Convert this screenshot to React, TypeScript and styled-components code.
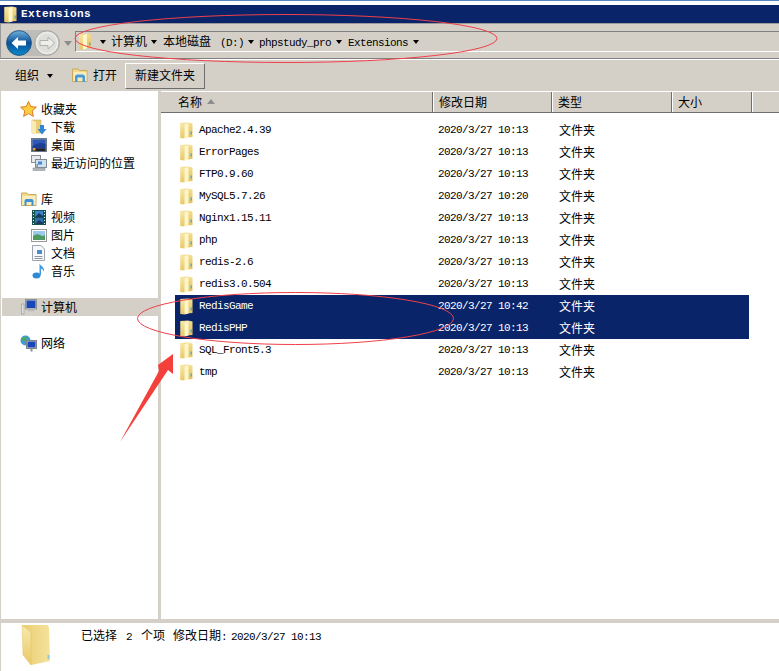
import { FC, ReactNode } from "react";
import styled, { createGlobalStyle } from "styled-components";

const FACE = "#d4d0c8";
const NAVY = "#0a246a";
const LATIN = `"Liberation Mono", "Noto Sans CJK SC", monospace`;

const Global = createGlobalStyle`
html, body { margin: 0; padding: 0; background: #fff; }
body { font-family: "Noto Sans CJK SC", "Liberation Sans", sans-serif; font-size: 12px; color: #000; }
`;

type Folder = { name: string; time: string; selected?: boolean };

const folders: Folder[] = [
    { name: "Apache2.4.39", time: "10:13" },
    { name: "ErrorPages", time: "10:13" },
    { name: "FTP0.9.60", time: "10:13" },
    { name: "MySQL5.7.26", time: "10:20" },
    { name: "Nginx1.15.11", time: "10:13" },
    { name: "php", time: "10:13" },
    { name: "redis-2.6", time: "10:13" },
    { name: "redis3.0.504", time: "10:13" },
    { name: "RedisGame", time: "10:42", selected: true },
    { name: "RedisPHP", time: "10:13", selected: true },
    { name: "SQL_Front5.3", time: "10:13" },
    { name: "tmp", time: "10:13" },
];

/* アイコン類 */
const FolderIcon: FC<{ w?: number; h?: number }> = ({ w = 13, h = 17 }) => (
    <svg width={w} height={h} viewBox="0 0 13 17">
        <defs>
            <linearGradient id="fold" x1="0" y1="0" x2="0" y2="1">
                <stop offset="0" stopColor="#f4de8e" />
                <stop offset="1" stopColor="#e3c05c" />
            </linearGradient>
            <linearGradient id="flap" x1="0" y1="0" x2="0" y2="1">
                <stop offset="0" stopColor="#f8e8a6" />
                <stop offset="1" stopColor="#e8c866" />
            </linearGradient>
        </defs>
        <path d="M.5 1 L8 .5 L12.5 1.5 V15 L.5 16 Z" fill="url(#fold)" />
        <path d="M.5 1 L4.5 2 V16.5 L.5 16 Z" fill="url(#flap)" />
        <path d="M4.5 2 L8.5 1 V15.5 L4.5 16.5 Z" fill="#fdf5cc" />
        <rect x="10.5" y="9.5" width="1.5" height="3" fill="#4fb0dc" />
    </svg>
);

const LargeFolder = () => (
    <svg width="30" height="43" viewBox="0 0 30 43">
        <defs>
            <linearGradient id="large" x1="0" y1="0" x2="1" y2="0">
                <stop offset="0" stopColor="#e9cd72" />
                <stop offset="1" stopColor="#f5e29c" />
            </linearGradient>
            <linearGradient id="largeFlap" x1="0" y1="0" x2="0" y2="1">
                <stop offset="0" stopColor="#f8e9ac" />
                <stop offset="1" stopColor="#e8c968" />
            </linearGradient>
        </defs>
        <path d="M1 1 L27 1 L28 4 L29 37 L10 41 Z" fill="url(#large)" />
        <path d="M1 1 L10 8 V41 L2 31 Z" fill="url(#largeFlap)" stroke="#e2c265" strokeWidth=".5" />
        <rect x="26.5" y="31" width="2" height="4" fill="#8ccbe0" />
    </svg>
);

const StarIcon = () => (
    <svg width="17" height="16" viewBox="0 0 17 16">
        <path d="M8.5 .5 L10.8 5.6 L16.4 6.2 L12.2 9.9 L13.4 15.4 L8.5 12.6 L3.6 15.4 L4.8 9.9 L.6 6.2 L6.2 5.6 Z" fill="#fbcf3e" stroke="#e0762a" strokeWidth="1" />
    </svg>
);

const DownloadIcon = () => (
    <svg width="16" height="16" viewBox="0 0 16 16">
        <path d="M1 1 H10 V14 H1 Z" fill="#e9cd78" stroke="#c9ab55" strokeWidth=".6" />
        <path d="M1 1 L5 3 V15 L1 14 Z" fill="#f8eab0" />
        <path d="M9 6 H13 V10 H15.5 L11 15.5 L6.5 10 H9 Z" fill="#2f86d4" />
    </svg>
);

const DesktopIcon = () => (
    <svg width="16" height="14" viewBox="0 0 16 14">
        <rect x=".5" y=".5" width="15" height="13" fill="#7f93a8" stroke="#6a7787" />
        <rect x="1.5" y="1.5" width="13" height="9" fill="#2e58b8" />
        <path d="M1.5 8 Q8 3 14.5 6 V10.5 H1.5 Z" fill="#1c3f94" />
        <rect x="1.5" y="10.5" width="13" height="2.5" fill="#222" />
        <rect x="2" y="10" width="2.5" height="2.5" fill="#e8a030" />
    </svg>
);

const RecentIcon = () => (
    <svg width="16" height="16" viewBox="0 0 16 16">
        <rect x=".5" y=".5" width="9" height="7" fill="#e8eaec" stroke="#8a8f94" />
        <rect x="4.5" y="4.5" width="11" height="8" fill="#cfe0ee" stroke="#7f8b96" />
        <rect x="7" y="6.5" width="4" height="3" fill="#4a86c8" />
        <rect x="2" y="13" width="12" height="2.5" fill="#b4b7ba" stroke="#85888b" strokeWidth=".5" />
        <rect x="5.5" y="9" width="1.5" height="4" fill="#8a8f94" />
    </svg>
);

const LibraryIcon: FC<{ size?: number }> = ({ size = 16 }) => (
    <svg width={size} height={size} viewBox="0 0 16 16">
        <path d="M.5 2 H6 L7.5 3.5 H15 V14.5 H.5 Z" fill="#f2d98c" stroke="#c8aa5a" />
        <rect x="1.5" y="5" width="13" height="9" fill="#f9edc0" />
        <path d="M3.5 14.5 V10 Q3.5 8 5.5 8 H10.5 Q12.5 8 12.5 10 V14.5 H10.5 V11 H5.5 V14.5 Z" fill="#3f92d2" />
    </svg>
);

const VideoIcon = () => (
    <svg width="14" height="15" viewBox="0 0 14 15">
        <rect width="14" height="15" fill="#17504e" />
        <rect x="3" y="1" width="8" height="6" fill="#3b83c8" />
        <rect x="3" y="8" width="8" height="6" fill="#2d6db0" />
        <path d="M3 7 L7 3 L11 6 V7 Z M3 14 L7 10 L11 13 V14 Z" fill="#1c3b5c" />
        {[1, 4, 7, 10, 13].map((y) => <rect key={y} x="1" y={y} width="1" height="1" fill="#cfe" />)}
        {[1, 4, 7, 10, 13].map((y) => <rect key={y} x="12" y={y} width="1" height="1" fill="#cfe" />)}
    </svg>
);

const PictureIcon = () => (
    <svg width="16" height="13" viewBox="0 0 16 13">
        <rect x=".5" y=".5" width="15" height="12" fill="#fff" stroke="#9a9a9a" />
        <rect x="2" y="2" width="12" height="5" fill="#9cc8ea" />
        <path d="M2 7 Q6 4 9 6 T14 6 V11 H2 Z" fill="#4f9a62" />
    </svg>
);

const DocumentIcon = () => (
    <svg width="13" height="16" viewBox="0 0 13 16">
        <path d="M.5 .5 H9 L12.5 4 V15.5 H.5 Z" fill="#f6f8fb" stroke="#9da4ad" />
        <rect x="5" y="5" width="5" height="4" fill="#4c8ac8" />
        <rect x="2.5" y="11" width="8" height="1" fill="#8d97a3" />
        <rect x="2.5" y="13" width="8" height="1" fill="#8d97a3" />
    </svg>
);

const MusicIcon = () => (
    <svg width="14" height="16" viewBox="0 0 14 16">
        <ellipse cx="4.5" cy="12.5" rx="4" ry="3" fill="#2f8ad6" />
        <path d="M7.5 12 V.5 C8.5 3 13 4 12 9 C11.5 6.5 10 6 9 5.5 V12 Z" fill="#3c9ae2" />
    </svg>
);

const ComputerIcon = () => (
    <svg width="16" height="16" viewBox="0 0 16 16">
        <rect x=".5" y="5" width="2.5" height="10" fill="#dfe2e4" stroke="#8f9295" strokeWidth=".6" />
        <rect x="4.5" y=".5" width="11" height="9.5" fill="#c9ccd0" stroke="#8c9196" />
        <rect x="5.5" y="1.5" width="9" height="7.5" fill="#1a47b8" />
        <rect x="7" y="10.5" width="6" height="2" fill="#b7babd" />
        <rect x="5" y="12.5" width="10" height="1.5" fill="#cfd2d4" />
    </svg>
);

const NetworkIcon = () => (
    <svg width="17" height="17" viewBox="0 0 17 17">
        <circle cx="5.5" cy="5.5" r="5" fill="#3d9bd8" />
        <path d="M2 3 Q5 1 7 3 Q6 6 3 7 Z M6 7 L10 6 L8 10 Z" fill="#4fae4a" />
        <rect x="6.5" y="5.5" width="10" height="8" fill="#c9ccd0" stroke="#7d8388" />
        <rect x="7.5" y="6.5" width="8" height="6" fill="#1a47b8" />
        <rect x="10.5" y="13.5" width="2" height="3" fill="#8c9196" />
    </svg>
);

const OpenIcon = () => (
    <svg width="16" height="16" viewBox="0 0 16 16">
        <path d="M.5 2 H6 L7.5 3.5 H15 V14.5 H.5 Z" fill="#f0d88e" stroke="#c8aa5a" />
        <rect x="1.5" y="5" width="13" height="9" fill="#f8ecbd" />
        <path d="M3 15 V10 Q3 7.5 5.5 7.5 H10.5 Q13 7.5 13 10 V15 H10.5 V10.5 H5.5 V15 Z" fill="#4a9ad8" />
    </svg>
);

const BackIcon = () => (
    <svg width="26" height="26" viewBox="0 0 26 26">
        <defs>
            <linearGradient id="back" x1="0" y1="0" x2="0" y2="1">
                <stop offset="0" stopColor="#6fb0da" />
                <stop offset=".5" stopColor="#0b4f96" />
                <stop offset="1" stopColor="#0a8ccf" />
            </linearGradient>
        </defs>
        <circle cx="13" cy="13" r="12.4" fill="url(#back)" stroke="#1c4a78" strokeWidth=".8" />
        <path d="M5.5 13 L12 7 V10.5 H20 V15.5 H12 V19 Z" fill="#fff" />
    </svg>
);

const ForwardIcon = () => (
    <svg width="26" height="26" viewBox="0 0 26 26">
        <circle cx="13" cy="13" r="12.2" fill="#dededb" stroke="#a4a4a2" />
        <circle cx="13" cy="13" r="10.4" fill="none" stroke="#f4f4f4" />
        <path d="M20.5 13 L14 7 V10.5 H6 V15.5 H14 V19 Z" fill="#eeeeec" stroke="#b0b0ae" />
    </svg>
);

/* 画面本体 */
const Page = styled.div`
position: relative;
width: 779px;
height: 671px;
overflow: hidden;
display: flex;
flex-direction: column;
background: ${FACE};
`;

const TopStrip = styled.div`
height: 1px;
background: #5b87bd;
`;

const WhiteStrip = styled.div`
height: 4px;
background: #fff;
`;

const TitleBar = styled.header`
height: 18px;
padding-left: 4px;
display: flex;
align-items: center;
gap: 4px;
background: ${NAVY};
color: #fff;
font-family: ${LATIN};
font-weight: 700;
font-size: 11px;
letter-spacing: .4px;
`;

const NavBar = styled.div`
height: 36px;
padding-left: 1px;
display: flex;
align-items: flex-start;
border-left: 1px solid #9a9a9a;
border-top: 1px solid #9a9a9a;
border-bottom: 1px solid #808080;
box-shadow: 0 1px 0 #fff;
box-sizing: border-box;
`;

const NavButtons = styled.div`
width: 73px;
height: 34px;
padding: 6px 0 0 4px;
display: flex;
box-sizing: border-box;
`;

const NavPill = styled.div`
width: 54px;
height: 26px;
display: flex;
gap: 2px;
border-radius: 13px;
background: #bdbcb8;
`;

const HistoryCaret = styled.span`
margin: 11px 0 0 4px;
width: 0;
height: 0;
border-left: 4px solid transparent;
border-right: 4px solid transparent;
border-top: 5px solid #8d8d8d;
`;

const AddressBox = styled.div`
flex: 1;
height: 21px;
margin-top: 7px;
padding: 0 0 3px 2px;
display: flex;
align-items: center;
border-top: 1px solid #808080;
border-left: 1px solid #808080;
border-bottom: 1px solid #fff;
box-sizing: border-box;
`;

const AddressFolder = styled.span`
display: flex;
margin-bottom: -3px;
`;

const Crumb = styled.span<{ $left: number }>`
margin-left: ${(p) => p.$left}px;
white-space: pre;
`;

const Latin = styled.span<{ $left?: number }>`
margin-left: ${(p) => p.$left ?? 0}px;
font-family: ${LATIN};
font-size: 11px;
letter-spacing: -.6px;
white-space: pre;
`;

const Caret = styled.span<{ $left?: number }>`
margin-left: ${(p) => p.$left ?? 0}px;
width: 0;
height: 0;
border-left: 3.5px solid transparent;
border-right: 3.5px solid transparent;
border-top: 4px solid #000;
`;

const CrumbCaret = styled(Caret)`
margin-top: 4px;
`;

const Toolbar = styled.div`
height: 31px;
margin-top: 1px;
padding-left: 15px;
display: flex;
align-items: center;
box-sizing: border-box;
`;

const ToolLabel = styled.span<{ $left?: number }>`
margin-left: ${(p) => p.$left ?? 0}px;
padding-bottom: 2px;
display: flex;
`;

const ToolButton = styled.button`
width: 80px;
height: 26px;
margin-left: 8px;
padding: 0 0 2px;
background: ${FACE};
border: 1px solid;
border-color: #fff #6e6e6e #6e6e6e #fff;
font: inherit;
color: #000;
`;

const Main = styled.div`
height: 528px;
display: flex;
padding-left: 1px;
`;

const Sidebar = styled.nav`
width: 157px;
padding: 9px 0 0 1px;
background: #fff;
box-sizing: border-box;
`;

const NavGroup = styled.div`
margin-bottom: 18px;
`;

const NavRow = styled.div<{ $child?: boolean; $active?: boolean }>`
height: 18px;
padding-left: ${(p) => (p.$child ? 28 : 18)}px;
display: flex;
align-items: center;
gap: 4px;
background: ${(p) => (p.$active ? FACE : "transparent")};
`;

const NavIconBox = styled.span`
width: 17px;
display: flex;
justify-content: center;
`;

const NavLabel = styled.span`
padding-bottom: 2px;
`;

const Content = styled.section`
flex: 1;
margin-left: 3px;
background: #fff;
`;

const HeaderRow = styled.div`
height: 22px;
display: grid;
grid-template-columns: 272px 119px 120px 80px 1fr;
background: ${FACE};
border-top: 1px solid #fff;
border-bottom: 1px solid #6e6e6e;
box-sizing: border-box;
`;

const HeaderCell = styled.div`
padding: 0 0 1px 5px;
display: flex;
align-items: center;
gap: 5px;
border-left: 1px solid #fff;
box-shadow: inset -1px 0 0 #6e6e6e;

&:first-child {
    padding-left: 17px;
    border-left: none;
}
&:last-child {
    box-shadow: none;
}
`;

const SortMark = styled.span`
width: 0;
height: 0;
border-left: 4px solid transparent;
border-right: 4px solid transparent;
border-bottom: 5px solid #8d8d8d;
`;

const FileList = styled.div`
padding: 6px 0 0 14px;
`;

const FileRow = styled.div<{ $selected?: boolean }>`
width: 574px;
height: 22px;
display: grid;
grid-template-columns: 24px 239px 121px 1fr;
align-items: center;
background: ${(p) => (p.$selected ? NAVY : "transparent")};
color: ${(p) => (p.$selected ? "#fff" : "#000")};
`;

const FileIcon = styled.span`
padding-left: 5px;
display: flex;
`;

const LatinCell = styled.span`
font-family: ${LATIN};
font-size: 11px;
letter-spacing: -.6px;
`;

const TypeCell = styled.span`
padding-bottom: 2px;
`;

const Details = styled.footer`
height: 48px;
margin: 4px 0 0 1px;
padding: 1px 0 0 20px;
display: flex;
gap: 30px;
background: #fff;
box-sizing: border-box;
`;

const DetailText = styled.div`
margin-top: 3px;
line-height: 16px;
display: flex;
align-items: baseline;
white-space: pre;
`;

const DetailPart = styled.span<{ $left?: number }>`
margin-left: ${(p) => p.$left ?? 0}px;
`;

const Annotation = styled.svg`
position: absolute;
left: 0;
top: 0;
pointer-events: none;
`;

const Row: FC<{ icon: ReactNode; label: string; child?: boolean; active?: boolean }> = ({ icon, label, child, active }) => (
    <NavRow $child={child} $active={active}>
        <NavIconBox>{icon}</NavIconBox>
        <NavLabel>{label}</NavLabel>
    </NavRow>
);

export default function App() {
    return (
        <Page>
            <Global />
            <TopStrip />
            <WhiteStrip />
            <TitleBar>
                <FolderIcon />
                <span>Extensions</span>
            </TitleBar>
            <NavBar>
                <NavButtons>
                    <NavPill>
                        <BackIcon />
                        <ForwardIcon />
                    </NavPill>
                    <HistoryCaret />
                </NavButtons>
                <AddressBox>
                    <AddressFolder><FolderIcon w={14} h={17} /></AddressFolder>
                    <CrumbCaret $left={8} />
                    <Crumb $left={5}>计算机</Crumb>
                    <CrumbCaret $left={4} />
                    <Crumb $left={6}>本地磁盘<Latin $left={3}> (D:)</Latin></Crumb>
                    <CrumbCaret $left={3.5} />
                    <Crumb $left={5.5}><Latin>phpstudy_pro</Latin></Crumb>
                    <CrumbCaret $left={5} />
                    <Crumb $left={6}><Latin>Extensions</Latin></Crumb>
                    <CrumbCaret $left={4.5} />
                </AddressBox>
            </NavBar>
            <Toolbar>
                <ToolLabel>组织</ToolLabel>
                <Caret $left={8} />
                <ToolLabel $left={19}><OpenIcon /></ToolLabel>
                <ToolLabel $left={5}>打开</ToolLabel>
                <ToolButton>新建文件夹</ToolButton>
            </Toolbar>
            <Main>
                <Sidebar>
                    <NavGroup>
                        <Row icon={<StarIcon />} label="收藏夹" />
                        <Row child icon={<DownloadIcon />} label="下载" />
                        <Row child icon={<DesktopIcon />} label="桌面" />
                        <Row child icon={<RecentIcon />} label="最近访问的位置" />
                    </NavGroup>
                    <NavGroup>
                        <Row icon={<LibraryIcon />} label="库" />
                        <Row child icon={<VideoIcon />} label="视频" />
                        <Row child icon={<PictureIcon />} label="图片" />
                        <Row child icon={<DocumentIcon />} label="文档" />
                        <Row child icon={<MusicIcon />} label="音乐" />
                    </NavGroup>
                    <NavGroup>
                        <Row active icon={<ComputerIcon />} label="计算机" />
                    </NavGroup>
                    <NavGroup>
                        <Row icon={<NetworkIcon />} label="网络" />
                    </NavGroup>
                </Sidebar>
                <Content>
                    <HeaderRow>
                        <HeaderCell>名称<SortMark /></HeaderCell>
                        <HeaderCell>修改日期</HeaderCell>
                        <HeaderCell>类型</HeaderCell>
                        <HeaderCell>大小</HeaderCell>
                        <HeaderCell />
                    </HeaderRow>
                    <FileList>
                        {folders.map((el) => (
                            <FileRow key={el.name} $selected={el.selected}>
                                <FileIcon><FolderIcon /></FileIcon>
                                <LatinCell>{el.name}</LatinCell>
                                <LatinCell>2020/3/27 {el.time}</LatinCell>
                                <TypeCell>文件夹</TypeCell>
                            </FileRow>
                        ))}
                    </FileList>
                </Content>
            </Main>
            <Details>
                <LargeFolder />
                <DetailText>
                    <span>已选择</span>
                    <DetailPart $left={9}><Latin>2</Latin></DetailPart>
                    <DetailPart $left={9}>个项</DetailPart>
                    <DetailPart $left={8}>修改日期</DetailPart>
                    <Latin>:</Latin>
                    <DetailPart $left={4}><Latin>2020/3/27 10:13</Latin></DetailPart>
                </DetailText>
            </Details>
            <Annotation width="779" height="671" viewBox="0 0 779 671">
                <ellipse cx="286" cy="38.5" rx="211" ry="24" fill="none" stroke="#f0404a" strokeWidth="1" />
                <ellipse cx="295.5" cy="318.5" rx="158" ry="26" fill="none" stroke="#f0404a" strokeWidth="1" />
                <path d="M120 442 L159 371 L158 365 L173 354 L173 374 L168 370 Z" fill="#f4403a" />
            </Annotation>
        </Page>
    );
}
